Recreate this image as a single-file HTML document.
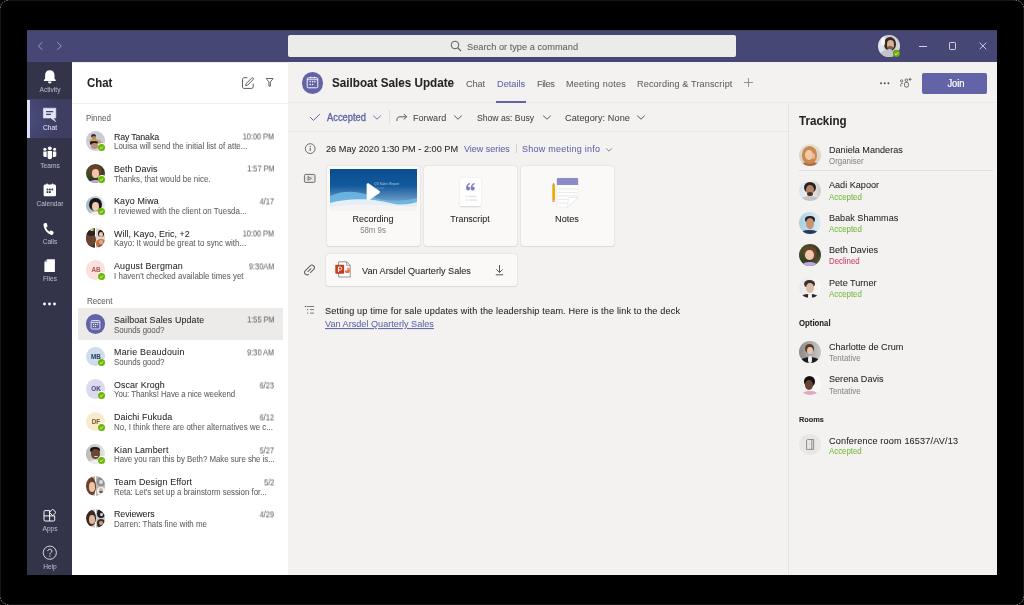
<!DOCTYPE html>
<html><head><meta charset="utf-8">
<style>
*{margin:0;padding:0;box-sizing:border-box}
html,body{width:1024px;height:605px;overflow:hidden;background:#000;font-family:"Liberation Sans",sans-serif}
.r{position:absolute;display:block}
.t{position:absolute;white-space:nowrap;line-height:1;will-change:transform;transform:scaleY(1.07);transform-origin:0 80%;-webkit-text-stroke:0.05px currentColor}
</style></head><body>

<div class="r" style="left:0px;top:0px;width:1024px;height:605px;background:#000;"></div>
<div class="r" style="left:8px;top:0px;width:1008px;height:1px;background:#161616;"></div>
<div class="r" style="left:0px;top:8px;width:1px;height:589px;background:#161616;"></div>
<div class="r" style="left:1023px;top:8px;width:1px;height:589px;background:#161616;"></div>
<div class="r" style="left:8px;top:604px;width:1008px;height:1px;background:#161616;"></div>
<svg class="r" style="left:0px;top:0px;" width="1024" height="605" viewBox="0 0 1024 605"><g stroke="#bdbdbd" stroke-width="0.8" fill="none" stroke-dasharray="1.3 1.2"><path d="M0.4 7.8 A7.8 7.8 0 0 1 8.2 0.4"/><path d="M1015.8 0.4 A7.8 7.8 0 0 1 1023.6 8.2"/><path d="M1023.6 596.8 A7.8 7.8 0 0 1 1015.8 604.6"/><path d="M8.2 604.6 A7.8 7.8 0 0 1 0.4 596.8"/></g></svg>
<div class="r" style="left:27px;top:30px;width:970px;height:545px;background:#f3f2f1;"></div>
<div class="r" style="left:27px;top:30px;width:970px;height:32px;background:#464775;"></div>
<div class="r" style="left:27px;top:30px;width:970px;height:1px;background:#3d3e66;"></div>
<svg class="r" style="left:36px;top:41px;" width="30" height="10" viewBox="0 0 30 10"><path d="M6.3 1.3 L2.3 5 L6.3 8.7" stroke="#9a9bc6" stroke-width="1" fill="none"/><path d="M21.3 1.3 L25.3 5 L21.3 8.7" stroke="#9a9bc6" stroke-width="1" fill="none"/></svg>
<div class="r" style="left:288px;top:35px;width:448px;height:22px;background:#ebebe9;border-radius:2px"></div>
<svg class="r" style="left:450px;top:40px;" width="12" height="12" viewBox="0 0 12 12"><circle cx="5" cy="5" r="3.8" stroke="#605e5c" stroke-width="1" fill="none"/><path d="M7.8 7.8 L11 11" stroke="#605e5c" stroke-width="1.1"/></svg>
<div class="t" style="top:42.73px;font-size:9.25px;color:#605e5c;left:467.30px;">Search or type a command</div>
<div class="r" style="left:878.35px;top:35.25px;width:21.7px;height:21.7px;border-radius:50%;background:linear-gradient(90deg,#e0e4ea 0 20%,#c8ccd0 40%,#d8d6d4);overflow:hidden;"><div style="position:absolute;left:0;top:0;width:100%;height:100%;filter:blur(0.5px)"><div style="position:absolute;left:-0.43px;top:14.76px;width:22.57px;height:12.15px;border-radius:50%;background:#c4c4c8;"></div><div style="position:absolute;left:5.64px;top:1.95px;width:12.15px;height:13.45px;border-radius:50%;background:#3a2a22;"></div><div style="position:absolute;left:8.25px;top:4.77px;width:6.94px;height:8.68px;border-radius:50%;background:#d8b098;"></div><div style="position:absolute;left:2.60px;top:2.17px;width:4.34px;height:8.68px;border-radius:50%;background:#f4f6f8;"></div><div style="position:absolute;left:8.90px;top:11.07px;width:5.64px;height:3.04px;border-radius:50%;background:#7a5e4c;"></div><div style="position:absolute;left:9.11px;top:14.11px;width:4.34px;height:2.17px;border-radius:50%;background:#b8c4d8;"></div></div></div>
<svg class="r" style="left:893.2px;top:49.9px;" width="7.2" height="7.2" viewBox="0 0 7.2 7.2"><circle cx="3.6" cy="3.6" r="3.5" fill="#6bb700" stroke="#464775" stroke-width="0.4"/><path d="M2 3.7 L3.1 4.7 L5.2 2.6" stroke="#fff" stroke-width="0.8" fill="none"/></svg>
<div class="r" style="left:919.4px;top:46px;width:7.4px;height:1px;background:#cfd0e6;"></div>
<div class="r" style="left:949px;top:42.3px;width:7.4px;height:7.4px;background:transparent;border:1px solid #cfd0e6;border-radius:1.2px"></div>
<svg class="r" style="left:978.8px;top:42px;" width="8" height="8" viewBox="0 0 8 8"><path d="M0.6 0.6 L7.3 7.3 M7.3 0.6 L0.6 7.3" stroke="#cfd0e6" stroke-width="0.95"/></svg>
<div class="r" style="left:27px;top:62px;width:45px;height:513px;background:#33344a;"></div>
<div class="r" style="left:27px;top:99px;width:45px;height:39px;background:radial-gradient(ellipse 30px 40px at 0% 50%, #4a4c7e, #3d3e62);"></div>
<div class="r" style="left:27px;top:100px;width:3px;height:37.5px;background:#dedff6;"></div>
<svg class="r" style="left:42px;top:69.5px;" width="16" height="16" viewBox="0 0 16 16"><path d="M7.8 0.3 C5 0.3 3.1 2.3 3.1 5.2 L3.1 8.6 C3.1 9.2 2.6 9.5 2.1 9.6 C1.7 9.7 1.7 11 2.1 11 L13.5 11 C13.9 11 13.9 9.7 13.5 9.6 C13 9.5 12.5 9.2 12.5 8.6 L12.5 5.2 C12.5 2.3 10.6 0.3 7.8 0.3 Z" fill="#fff"/><path d="M5.9 11.6 C6 14.2 9.6 14.2 9.7 11.6 Z" fill="#fff"/></svg>
<div class="t" style="top:86.55px;font-size:6.6px;color:#b8b8ca;left:-150.50px;width:400px;text-align:center;">Activity</div>
<svg class="r" style="left:42px;top:107px;" width="15" height="16" viewBox="0 0 15 16"><path d="M1.4 1.2 L13.8 1.2 L13.8 11 L11.4 11 L13.6 14.6 L8.6 11 L1.4 11 Z" fill="#e4e4f6" stroke="#e4e4f6" stroke-width="0.6" stroke-linejoin="round"/><path d="M4 4.6 L11.2 4.6 M4 7.4 L9 7.4" stroke="#45466e" stroke-width="1.1"/></svg>
<div class="t" style="top:124.55px;font-size:6.6px;color:#e4e4f6;left:-150.50px;width:400px;text-align:center;">Chat</div>
<svg class="r" style="left:42px;top:145.5px;" width="15" height="15" viewBox="0 0 15 15"><g fill="#fff"><circle cx="7.8" cy="2.3" r="1.9"/><circle cx="2.9" cy="3.3" r="1.5"/><circle cx="12.6" cy="3.3" r="1.5"/><path d="M5.6 5 L10 5 L10 11.3 C10 12.6 9 13.3 7.8 13.3 C6.6 13.3 5.6 12.6 5.6 11.3 Z"/><path d="M1.3 5.6 L4.7 5.6 L4.7 10.9 C3.4 11.3 1.3 10.6 1.3 9.4 Z"/><path d="M10.9 5.6 L14.3 5.6 L14.3 9.4 C14.3 10.6 12.2 11.3 10.9 10.9 Z"/></g></svg>
<div class="t" style="top:162.55px;font-size:6.6px;color:#b8b8ca;left:-150.50px;width:400px;text-align:center;">Teams</div>
<svg class="r" style="left:42px;top:183.2px;" width="15" height="15" viewBox="0 0 15 15"><path d="M3.2 1.6 L12.4 1.6 C13.3 1.6 14 2.3 14 3.2 L14 11.7 C14 12.6 13.3 13.3 12.4 13.3 L3.2 13.3 C2.3 13.3 1.6 12.6 1.6 11.7 L1.6 3.2 C1.6 2.3 2.3 1.6 3.2 1.6 Z" fill="#fff"/><circle cx="5" cy="1.3" r="0.9" fill="#fff"/><circle cx="10.6" cy="1.3" r="0.9" fill="#fff"/><g fill="#33344a"><rect x="4.6" y="5.6" width="1.8" height="1.8"/><rect x="7" y="5.6" width="1.8" height="1.8"/><rect x="9.4" y="5.6" width="1.8" height="1.8"/><rect x="4.6" y="8.2" width="1.8" height="1.8"/><rect x="7" y="8.2" width="1.8" height="1.8"/></g></svg>
<div class="t" style="top:200.55px;font-size:6.6px;color:#b8b8ca;left:-150.50px;width:400px;text-align:center;">Calendar</div>
<svg class="r" style="left:41px;top:221.5px;" width="15" height="15" viewBox="0 0 15 15"><path d="M3.4 1.2 L4.9 0.9 C5.4 0.8 5.8 1.1 5.9 1.5 L6.5 4.1 C6.6 4.5 6.4 4.9 6 5.1 L5.1 5.6 C5.7 7.4 6.9 8.8 8.5 9.8 L9.1 9 C9.4 8.6 9.8 8.5 10.2 8.6 L12.1 9.6 C12.5 9.8 12.7 10.2 12.6 10.6 L12.2 12.1 C12 12.7 11.4 13 10.8 12.9 C6.8 12.2 3.3 8.2 2.5 3 C2.4 2.2 2.7 1.4 3.4 1.2 Z" fill="#fff"/></svg>
<div class="t" style="top:238.55px;font-size:6.6px;color:#b8b8ca;left:-150.50px;width:400px;text-align:center;">Calls</div>
<svg class="r" style="left:42px;top:258px;" width="15" height="15" viewBox="0 0 15 15"><path d="M5.2 1.2 L12.9 1.2 L12.9 14 L2.4 14 L2.4 4 Z" fill="#fff"/><path d="M2.4 4 L5.2 4 L5.2 1.2 Z" fill="#a8a8ba"/></svg>
<div class="t" style="top:275.55px;font-size:6.6px;color:#b8b8ca;left:-150.50px;width:400px;text-align:center;">Files</div>
<svg class="r" style="left:42px;top:299.5px;" width="15" height="8" viewBox="0 0 15 8"><circle cx="2.5" cy="4" r="1.4" fill="#fff"/><circle cx="7.5" cy="4" r="1.4" fill="#fff"/><circle cx="12.5" cy="4" r="1.4" fill="#fff"/></svg>
<svg class="r" style="left:42px;top:507.5px;" width="15" height="15" viewBox="0 0 15 15"><g stroke="#fff" stroke-width="0.95" fill="none" stroke-linejoin="round"><path d="M7.6 2.6 L3.1 2.6 Q2 2.6 2 3.7 L2 11.9 Q2 13 3.1 13 L11.6 13 Q12.7 13 12.7 11.9 L12.7 7.9 L2 7.9 M7.6 2.6 L7.6 13"/><path d="M10.7 1.1 L14 4.4 L10.7 7.7 L7.4 4.4 Z"/></g></svg>
<div class="t" style="top:525.55px;font-size:6.6px;color:#b8b8ca;left:-150.50px;width:400px;text-align:center;">Apps</div>
<svg class="r" style="left:42px;top:545px;" width="16" height="16" viewBox="0 0 16 16"><circle cx="7.8" cy="7.7" r="6.6" stroke="#e0e0ea" stroke-width="0.95" fill="none"/><path d="M5.7 6 C5.7 3.7 10 3.6 10 5.9 C10 7.4 7.9 7.6 7.9 9.5" stroke="#e0e0ea" stroke-width="1" fill="none"/><circle cx="7.9" cy="11.2" r="0.65" fill="#e0e0ea"/></svg>
<div class="t" style="top:563.55px;font-size:6.6px;color:#b8b8ca;left:-150.50px;width:400px;text-align:center;">Help</div>
<div class="r" style="left:72px;top:62px;width:216px;height:513px;background:#fff;"></div>
<div class="r" style="left:72px;top:62px;width:216px;height:1px;background:#e8e8ee;"></div>
<div class="t" style="top:77.65px;font-size:11.4px;color:#252423;font-weight:700;left:86.70px;">Chat</div>
<div class="r" style="left:72px;top:103px;width:216px;height:1px;background:#f0f0f0;"></div>
<svg class="r" style="left:241px;top:75.5px;" width="14" height="14" viewBox="0 0 14 14"><path d="M6.4 1.7 L3 1.7 C2.1 1.7 1.5 2.3 1.5 3.2 L1.5 10.9 C1.5 11.8 2.1 12.4 3 12.4 L10.7 12.4 C11.6 12.4 12.2 11.8 12.2 10.9 L12.2 7.6" stroke="#605e5c" stroke-width="1" fill="none"/><path d="M10.6 2.2 C11.1 1.7 11.8 1.7 12.2 2.1 C12.6 2.5 12.6 3.2 12.1 3.7 L6.6 9.1 L4.6 9.6 L5.1 7.6 Z" stroke="#605e5c" stroke-width="1" fill="none" stroke-linejoin="round"/></svg>
<svg class="r" style="left:264px;top:76px;" width="12" height="12" viewBox="0 0 12 12"><path d="M2.2 2.5 L9.1 2.5 L6.4 5.9 L6.4 10.1 L4.9 10.1 L4.9 5.9 Z" stroke="#605e5c" stroke-width="0.95" fill="none" stroke-linejoin="round"/></svg>
<div class="t" style="top:114.85px;font-size:8.0px;color:#616161;left:86.20px;">Pinned</div>
<div class="t" style="top:297.85px;font-size:8.0px;color:#616161;left:86.60px;">Recent</div>
<div class="r" style="left:78px;top:308px;width:205px;height:32px;background:#edebe9;"></div>
<div class="r" style="left:85.75px;top:131.25px;width:19.5px;height:19.5px;border-radius:50%;background:linear-gradient(180deg,#c6c8da,#d8d2d4);overflow:hidden;"><div style="position:absolute;left:0;top:0;width:100%;height:100%;filter:blur(0.5px)"><div style="position:absolute;left:0.97px;top:16.18px;width:15.60px;height:6.63px;border-radius:50%;background:#d8d0d0;"></div><div style="position:absolute;left:3.31px;top:7.80px;width:12.09px;height:3.90px;border-radius:50%;background:#c8a850;"></div><div style="position:absolute;left:4.49px;top:9.95px;width:8.19px;height:2.34px;border-radius:50%;background:#2a2424;"></div><div style="position:absolute;left:5.07px;top:2.54px;width:5.46px;height:4.29px;border-radius:50%;background:#3a2c24;"></div><div style="position:absolute;left:6.04px;top:4.68px;width:4.29px;height:3.90px;border-radius:50%;background:#b88a6c;"></div><div style="position:absolute;left:4.29px;top:10.34px;width:7.02px;height:3.51px;border-radius:50%;background:#241c1c;"></div><div style="position:absolute;left:4.88px;top:11.89px;width:7.41px;height:5.85px;border-radius:50%;background:#b89080;"></div><div style="position:absolute;left:11.89px;top:10.92px;width:5.85px;height:2.34px;border-radius:50%;background:#b89890;"></div></div></div>
<div class="r" style="left:97.50px;top:143.00px;width:8.60px;height:8.60px;border-radius:50%;background:#fff"></div>
<svg class="r" style="left:98.3px;top:143.8px;" width="7" height="7" viewBox="0 0 7 7"><circle cx="3.5" cy="3.5" r="3.5" fill="#6bb700"/><path d="M1.9600000000000002 3.64 L3.08 4.69 L5.04 2.52" stroke="#fff" stroke-width="0.84" fill="none"/></svg>
<div class="t" style="top:132.90px;font-size:8.9px;color:#252423;left:113.50px;letter-spacing:-0.182px">Ray Tanaka</div>
<div class="t" style="top:142.90px;font-size:7.9px;color:#616161;left:113.50px;letter-spacing:0.044px">Louisa will send the initial list of atte...</div>
<div class="t" style="top:133.75px;font-size:8.2px;color:#616161;right:749.60px;text-align:right;transform:scale(0.895,1.07);transform-origin:100% 80%">10:00 PM</div>
<div class="r" style="left:85.75px;top:163.55px;width:19.5px;height:19.5px;border-radius:50%;background:linear-gradient(135deg,#4a5a30,#2e3a20 60%,#6a6a3a);overflow:hidden;"><div style="position:absolute;left:0;top:0;width:100%;height:100%;filter:blur(0.5px)"><div style="position:absolute;left:2.92px;top:16.18px;width:13.65px;height:6.63px;border-radius:50%;background:#c0a8e0;"></div><div style="position:absolute;left:3.31px;top:1.75px;width:12.87px;height:12.87px;border-radius:50%;background:#6a4028;"></div><div style="position:absolute;left:5.85px;top:5.46px;width:7.80px;height:9.36px;border-radius:50%;background:#f0c8b0;"></div></div></div>
<div class="r" style="left:97.50px;top:175.30px;width:8.60px;height:8.60px;border-radius:50%;background:#fff"></div>
<svg class="r" style="left:98.3px;top:176.1px;" width="7" height="7" viewBox="0 0 7 7"><circle cx="3.5" cy="3.5" r="3.5" fill="#6bb700"/><path d="M1.9600000000000002 3.64 L3.08 4.69 L5.04 2.52" stroke="#fff" stroke-width="0.84" fill="none"/></svg>
<div class="t" style="top:164.90px;font-size:8.9px;color:#252423;left:113.50px;letter-spacing:0.052px">Beth Davis</div>
<div class="t" style="top:175.90px;font-size:7.9px;color:#616161;left:113.50px;letter-spacing:0.021px">Thanks, that would be nice.</div>
<div class="t" style="top:165.75px;font-size:8.2px;color:#616161;right:749.60px;text-align:right;transform:scale(0.895,1.07);transform-origin:100% 80%">1:57 PM</div>
<div class="r" style="left:85.75px;top:195.85px;width:19.5px;height:19.5px;border-radius:50%;background:linear-gradient(90deg,#98b8c8,#e8eeee);overflow:hidden;"><div style="position:absolute;left:0;top:0;width:100%;height:100%;filter:blur(0.5px)"><div style="position:absolute;left:1.95px;top:15.99px;width:15.60px;height:7.02px;border-radius:50%;background:#f4f0ee;"></div><div style="position:absolute;left:3.71px;top:1.75px;width:12.09px;height:13.65px;border-radius:50%;background:#1c1818;"></div><div style="position:absolute;left:6.04px;top:6.04px;width:7.41px;height:8.97px;border-radius:50%;background:#f0cab0;"></div></div></div>
<div class="r" style="left:97.50px;top:207.60px;width:8.60px;height:8.60px;border-radius:50%;background:#fff"></div>
<svg class="r" style="left:98.3px;top:208.4px;" width="7" height="7" viewBox="0 0 7 7"><circle cx="3.5" cy="3.5" r="3.5" fill="#6bb700"/><path d="M1.9600000000000002 3.64 L3.08 4.69 L5.04 2.52" stroke="#fff" stroke-width="0.84" fill="none"/></svg>
<div class="t" style="top:196.90px;font-size:8.9px;color:#252423;left:113.50px;letter-spacing:0.159px">Kayo Miwa</div>
<div class="t" style="top:207.90px;font-size:7.9px;color:#616161;left:113.50px;letter-spacing:0.026px">I reviewed with the client on Tuesda...</div>
<div class="t" style="top:197.75px;font-size:8.2px;color:#616161;right:749.60px;text-align:right;transform:scale(0.895,1.07);transform-origin:100% 80%">4/17</div>
<div class="r" style="left:85.75px;top:228.15px;width:19.5px;height:19.5px;border-radius:50%;background:linear-gradient(90deg,#3a3030 0 50%,#fff 50% 55%,#dcd4d0 55%);overflow:hidden;"><div style="position:absolute;left:0;top:0;width:100%;height:100%;filter:blur(0.5px)"><div style="position:absolute;left:0.58px;top:4.49px;width:9.75px;height:13.65px;border-radius:50%;background:#6a4430;"></div><div style="position:absolute;left:1.17px;top:1.75px;width:8.58px;height:5.85px;border-radius:50%;background:#2a2222;"></div><div style="position:absolute;left:3.90px;top:0.58px;width:3.90px;height:1.95px;border-radius:50%;background:#e8c060;"></div><div style="position:absolute;left:11.89px;top:1.75px;width:6.63px;height:6.63px;border-radius:50%;background:#1e1a1a;"></div><div style="position:absolute;left:13.06px;top:3.71px;width:4.29px;height:5.07px;border-radius:50%;background:#f0c8b0;"></div><div style="position:absolute;left:10.34px;top:10.92px;width:9.75px;height:8.58px;border-radius:50%;background:#d07030;"></div><div style="position:absolute;left:13.65px;top:12.29px;width:3.12px;height:3.51px;border-radius:50%;background:#d8a890;"></div><div style="position:absolute;left:12.29px;top:16.77px;width:5.85px;height:3.12px;border-radius:50%;background:#4a5a9a;"></div></div></div>
<div class="t" style="top:229.90px;font-size:8.9px;color:#252423;left:113.50px;letter-spacing:0.051px">Will, Kayo, Eric, +2</div>
<div class="t" style="top:239.90px;font-size:7.9px;color:#616161;left:113.50px;letter-spacing:0.036px">Kayo: It would be great to sync with...</div>
<div class="t" style="top:230.75px;font-size:8.2px;color:#616161;right:749.60px;text-align:right;transform:scale(0.895,1.07);transform-origin:100% 80%">10:00 PM</div>
<div class="r" style="left:85.75px;top:260.45px;width:19.5px;height:19.5px;border-radius:50%;background:#fbe0dc;overflow:hidden;"></div>
<div class="t" style="top:266.70px;font-size:6.3px;color:#a8605a;font-weight:700;left:-104.50px;width:400px;text-align:center;">AB</div>
<div class="r" style="left:97.50px;top:272.20px;width:8.60px;height:8.60px;border-radius:50%;background:#fff"></div>
<svg class="r" style="left:98.3px;top:273.0px;" width="7" height="7" viewBox="0 0 7 7"><circle cx="3.5" cy="3.5" r="3.5" fill="#6bb700"/><path d="M1.9600000000000002 3.64 L3.08 4.69 L5.04 2.52" stroke="#fff" stroke-width="0.84" fill="none"/></svg>
<div class="t" style="top:261.90px;font-size:8.9px;color:#252423;left:113.50px;letter-spacing:0.201px">August Bergman</div>
<div class="t" style="top:272.90px;font-size:7.9px;color:#616161;left:113.50px;letter-spacing:0.036px">I haven't checked available times yet</div>
<div class="t" style="top:262.75px;font-size:8.2px;color:#616161;right:749.60px;text-align:right;transform:scale(0.895,1.07);transform-origin:100% 80%">9:30AM</div>
<div class="r" style="left:85.75px;top:314.45px;width:19.5px;height:19.5px;border-radius:50%;background:#6264a7;overflow:hidden;"></div>
<svg class="r" style="left:90px;top:318.7px;" width="11" height="11" viewBox="0 0 11 11"><rect x="1.1" y="1.6" width="8.8" height="8.4" rx="1" stroke="#e8e8f6" stroke-width="0.9" fill="none"/><path d="M1.1 3.4 L9.9 3.4" stroke="#e8e8f6" stroke-width="0.9"/><circle cx="4" cy="1.6" r="0.7" fill="#e8e8f6"/><circle cx="7" cy="1.6" r="0.7" fill="#e8e8f6"/><g fill="#e8e8f6"><circle cx="3.6" cy="5.4" r="0.65"/><circle cx="5.5" cy="5.4" r="0.65"/><circle cx="7.4" cy="5.4" r="0.65"/><circle cx="3.6" cy="7.4" r="0.65"/><circle cx="5.5" cy="7.4" r="0.65"/></g></svg>
<div class="t" style="top:315.90px;font-size:8.9px;color:#252423;left:113.50px;letter-spacing:0.117px">Sailboat Sales Update</div>
<div class="t" style="top:326.90px;font-size:7.9px;color:#616161;left:113.50px;letter-spacing:-0.041px">Sounds good?</div>
<div class="t" style="top:316.75px;font-size:8.2px;color:#616161;right:749.60px;text-align:right;transform:scale(0.895,1.07);transform-origin:100% 80%">1:55 PM</div>
<div class="r" style="left:85.75px;top:346.85px;width:19.5px;height:19.5px;border-radius:50%;background:#cfdcec;overflow:hidden;"></div>
<div class="t" style="top:353.70px;font-size:6.3px;color:#2a4070;font-weight:700;left:-104.50px;width:400px;text-align:center;">MB</div>
<div class="r" style="left:97.50px;top:358.60px;width:8.60px;height:8.60px;border-radius:50%;background:#fff"></div>
<svg class="r" style="left:98.3px;top:359.4px;" width="7" height="7" viewBox="0 0 7 7"><circle cx="3.5" cy="3.5" r="3.5" fill="#6bb700"/><path d="M1.9600000000000002 3.64 L3.08 4.69 L5.04 2.52" stroke="#fff" stroke-width="0.84" fill="none"/></svg>
<div class="t" style="top:347.90px;font-size:8.9px;color:#252423;left:113.50px;letter-spacing:0.237px">Marie Beaudouin</div>
<div class="t" style="top:358.90px;font-size:7.9px;color:#616161;left:113.50px;letter-spacing:-0.041px">Sounds good?</div>
<div class="t" style="top:348.75px;font-size:8.2px;color:#616161;right:749.60px;text-align:right;transform:scale(0.895,1.07);transform-origin:100% 80%">9:30 AM</div>
<div class="r" style="left:85.75px;top:379.25px;width:19.5px;height:19.5px;border-radius:50%;background:#dcdaf0;overflow:hidden;"></div>
<div class="t" style="top:385.70px;font-size:6.3px;color:#464775;font-weight:700;left:-104.50px;width:400px;text-align:center;">OK</div>
<div class="r" style="left:97.50px;top:391.00px;width:8.60px;height:8.60px;border-radius:50%;background:#fff"></div>
<svg class="r" style="left:98.3px;top:391.8px;" width="7" height="7" viewBox="0 0 7 7"><circle cx="3.5" cy="3.5" r="3.5" fill="#6bb700"/><path d="M1.9600000000000002 3.64 L3.08 4.69 L5.04 2.52" stroke="#fff" stroke-width="0.84" fill="none"/></svg>
<div class="t" style="top:380.90px;font-size:8.9px;color:#252423;left:113.50px;letter-spacing:0.094px">Oscar Krogh</div>
<div class="t" style="top:390.90px;font-size:7.9px;color:#616161;left:113.50px;letter-spacing:-0.068px">You: Thanks! Have a nice weekend</div>
<div class="t" style="top:381.75px;font-size:8.2px;color:#616161;right:749.60px;text-align:right;transform:scale(0.895,1.07);transform-origin:100% 80%">6/23</div>
<div class="r" style="left:85.75px;top:411.65px;width:19.5px;height:19.5px;border-radius:50%;background:#f6ebcd;overflow:hidden;"></div>
<div class="t" style="top:418.70px;font-size:6.3px;color:#7a5a30;font-weight:700;left:-104.50px;width:400px;text-align:center;">DF</div>
<div class="r" style="left:97.50px;top:423.40px;width:8.60px;height:8.60px;border-radius:50%;background:#fff"></div>
<svg class="r" style="left:98.3px;top:424.2px;" width="7" height="7" viewBox="0 0 7 7"><circle cx="3.5" cy="3.5" r="3.5" fill="#6bb700"/><path d="M1.9600000000000002 3.64 L3.08 4.69 L5.04 2.52" stroke="#fff" stroke-width="0.84" fill="none"/></svg>
<div class="t" style="top:412.90px;font-size:8.9px;color:#252423;left:113.50px;letter-spacing:0.118px">Daichi Fukuda</div>
<div class="t" style="top:423.90px;font-size:7.9px;color:#616161;left:113.50px;letter-spacing:0.041px">No, I think there are other alternatives we c...</div>
<div class="t" style="top:413.75px;font-size:8.2px;color:#616161;right:749.60px;text-align:right;transform:scale(0.895,1.07);transform-origin:100% 80%">6/12</div>
<div class="r" style="left:85.75px;top:444.05px;width:19.5px;height:19.5px;border-radius:50%;background:linear-gradient(90deg,#b8b8b8,#e4e4e4);overflow:hidden;"><div style="position:absolute;left:0;top:0;width:100%;height:100%;filter:blur(0.5px)"><div style="position:absolute;left:1.95px;top:16.38px;width:15.60px;height:7.02px;border-radius:50%;background:#eeeeee;"></div><div style="position:absolute;left:4.29px;top:2.54px;width:10.14px;height:6.63px;border-radius:50%;background:#181414;"></div><div style="position:absolute;left:5.66px;top:5.07px;width:8.19px;height:10.14px;border-radius:50%;background:#6a4634;"></div><div style="position:absolute;left:8.58px;top:12.29px;width:3.90px;height:1.17px;border-radius:50%;background:#e8e0dc;"></div></div></div>
<div class="r" style="left:97.50px;top:455.80px;width:8.60px;height:8.60px;border-radius:50%;background:#fff"></div>
<svg class="r" style="left:98.3px;top:456.6px;" width="7" height="7" viewBox="0 0 7 7"><circle cx="3.5" cy="3.5" r="3.5" fill="#6bb700"/><path d="M1.9600000000000002 3.64 L3.08 4.69 L5.04 2.52" stroke="#fff" stroke-width="0.84" fill="none"/></svg>
<div class="t" style="top:445.90px;font-size:8.9px;color:#252423;left:113.50px;letter-spacing:0.143px">Kian Lambert</div>
<div class="t" style="top:455.90px;font-size:7.9px;color:#616161;left:113.50px;letter-spacing:-0.056px">Have you ran this by Beth? Make sure she is...</div>
<div class="t" style="top:446.75px;font-size:8.2px;color:#616161;right:749.60px;text-align:right;transform:scale(0.895,1.07);transform-origin:100% 80%">5/27</div>
<div class="r" style="left:85.75px;top:476.45px;width:19.5px;height:19.5px;border-radius:50%;background:linear-gradient(90deg,#c8b0a0 0 50%,#fff 50% 55%,#b8b8b8 55%);overflow:hidden;"><div style="position:absolute;left:0;top:0;width:100%;height:100%;filter:blur(0.5px)"><div style="position:absolute;left:0.39px;top:0.39px;width:10.14px;height:18.72px;border-radius:50%;background:#6a4030;"></div><div style="position:absolute;left:2.92px;top:5.66px;width:6.63px;height:9.75px;border-radius:50%;background:#ecc4a8;"></div><div style="position:absolute;left:11.31px;top:0.78px;width:7.80px;height:8.58px;border-radius:50%;background:#909090;"></div><div style="position:absolute;left:13.65px;top:3.51px;width:3.12px;height:3.90px;border-radius:50%;background:#d8d8d8;"></div><div style="position:absolute;left:11.31px;top:10.14px;width:7.80px;height:8.58px;border-radius:50%;background:#f0f0f0;"></div><div style="position:absolute;left:13.26px;top:11.89px;width:3.90px;height:4.29px;border-radius:50%;background:#d8b098;"></div><div style="position:absolute;left:13.26px;top:15.02px;width:3.90px;height:1.95px;border-radius:50%;background:#6a5040;"></div></div></div>
<div class="t" style="top:477.90px;font-size:8.9px;color:#252423;left:113.50px;letter-spacing:0.158px">Team Design Effort</div>
<div class="t" style="top:488.90px;font-size:7.9px;color:#616161;left:113.50px;letter-spacing:-0.021px">Reta: Let's set up a brainstorm session for...</div>
<div class="t" style="top:478.75px;font-size:8.2px;color:#616161;right:749.60px;text-align:right;transform:scale(0.895,1.07);transform-origin:100% 80%">5/2</div>
<div class="r" style="left:85.75px;top:508.85px;width:19.5px;height:19.5px;border-radius:50%;background:linear-gradient(90deg,#d8c8c0 0 50%,#fff 50% 55%,#c8c8c8 55%);overflow:hidden;"><div style="position:absolute;left:0;top:0;width:100%;height:100%;filter:blur(0.5px)"><div style="position:absolute;left:0.39px;top:1.17px;width:10.14px;height:15.60px;border-radius:50%;background:#3a2820;"></div><div style="position:absolute;left:3.31px;top:6.24px;width:5.85px;height:8.58px;border-radius:50%;background:#e0b8a0;"></div><div style="position:absolute;left:10.92px;top:0.58px;width:8.58px;height:8.97px;border-radius:50%;background:#202020;"></div><div style="position:absolute;left:14.43px;top:4.29px;width:2.34px;height:3.12px;border-radius:50%;background:#d0d0d0;"></div><div style="position:absolute;left:10.92px;top:10.53px;width:8.58px;height:8.58px;border-radius:50%;background:#3a3028;"></div><div style="position:absolute;left:13.46px;top:12.09px;width:3.51px;height:3.90px;border-radius:50%;background:#c89878;"></div></div></div>
<div class="t" style="top:509.90px;font-size:8.9px;color:#252423;left:113.50px;letter-spacing:-0.093px">Reviewers</div>
<div class="t" style="top:520.90px;font-size:7.9px;color:#616161;left:113.50px;letter-spacing:0.024px">Darren: Thats fine with me</div>
<div class="t" style="top:510.75px;font-size:8.2px;color:#616161;right:749.60px;text-align:right;transform:scale(0.895,1.07);transform-origin:100% 80%">4/29</div>
<div class="r" style="left:288px;top:62px;width:709px;height:41px;background:#f3f2f1;"></div>
<div class="r" style="left:288px;top:102px;width:709px;height:1px;background:#ebe9e7;"></div>
<div class="r" style="left:301.85px;top:72.15px;width:21.5px;height:21.5px;border-radius:50%;background:#6264a7;overflow:hidden;"></div>
<svg class="r" style="left:306px;top:76px;" width="13" height="13" viewBox="0 0 13 13"><rect x="1.2" y="1.8" width="10.6" height="10" rx="1.1" stroke="#fff" stroke-width="0.95" fill="none"/><path d="M1.2 3.7 L11.8 3.7" stroke="#fff" stroke-width="0.8"/><circle cx="4.6" cy="1.6" r="0.8" fill="#fff"/><circle cx="8.4" cy="1.6" r="0.8" fill="#fff"/><g fill="#fff"><circle cx="4.2" cy="5.8" r="0.75"/><circle cx="6.6" cy="5.8" r="0.75"/><circle cx="8.9" cy="5.8" r="0.75"/><circle cx="4.2" cy="8.4" r="0.75"/><circle cx="6.6" cy="8.4" r="0.75"/></g></svg>
<div class="t" style="top:77.00px;font-size:11.7px;color:#252423;font-weight:700;left:331.80px;">Sailboat Sales Update</div>
<div class="t" style="top:79.70px;font-size:9.3px;color:#616161;left:465.90px;letter-spacing:-0.2px">Chat</div>
<div class="t" style="top:79.73px;font-size:9.23px;color:#6264a7;left:496.60px;">Details</div>
<div class="r" style="left:496px;top:100.5px;width:29.5px;height:2px;background:#6264a7;"></div>
<div class="t" style="top:79.70px;font-size:9.3px;color:#616161;left:536.60px;letter-spacing:-0.45px">Files</div>
<div class="t" style="top:79.80px;font-size:9.1px;color:#616161;left:565.60px;letter-spacing:0.220px">Meeting notes</div>
<div class="t" style="top:79.80px;font-size:9.1px;color:#616161;left:636.80px;letter-spacing:0.136px">Recording &amp; Transcript</div>
<svg class="r" style="left:743px;top:77px;" width="11" height="11" viewBox="0 0 11 11"><path d="M5.5 1 L5.5 10 M1 5.5 L10 5.5" stroke="#8a8886" stroke-width="0.9"/></svg>
<svg class="r" style="left:872px;top:72px;" width="46" height="22" viewBox="0 0 46 22"><circle cx="9" cy="11.2" r="0.95" fill="#484644"/><circle cx="12.7" cy="11.2" r="0.95" fill="#484644"/><circle cx="16.4" cy="11.2" r="0.95" fill="#484644"/><g stroke="#605e5c" stroke-width="0.9" fill="none"><circle cx="29.6" cy="8.9" r="1.1"/><circle cx="34.4" cy="8.2" r="1.3"/><path d="M30.8 11.4 L30 11.4 C29 11.4 28.8 12.2 28.8 13 L28.8 14.6"/><rect x="32.6" y="10.4" width="3.8" height="4.6" rx="1.2"/><path d="M38 5.8 L38 8.8 M36.5 7.3 L39.5 7.3"/></g></svg>
<div class="r" style="left:922.3px;top:72.5px;width:64.6px;height:21.1px;background:#6264a7;border-radius:2px"></div>
<div class="t" style="top:79.15px;font-size:9.4px;color:#fff;left:755.60px;width:400px;text-align:center;-webkit-text-stroke:0.2px #fff">Join</div>
<div class="r" style="left:288px;top:103px;width:500px;height:28px;background:#f3f2f1;"></div>
<div class="r" style="left:288px;top:130.5px;width:500px;height:1px;background:#e9e7e5;"></div>
<svg class="r" style="left:309px;top:113px;" width="12" height="9" viewBox="0 0 12 9"><path d="M1.2 4.2 L4.4 7.4 L10.8 1.2" stroke="#6264a7" stroke-width="1" fill="none"/></svg>
<div class="t" style="top:113.67px;font-size:9.35px;color:#6264a7;left:326.50px;-webkit-text-stroke:0.3px #6264a7">Accepted</div>
<svg class="r" style="left:372px;top:114px;" width="10" height="7" viewBox="0 0 10 7"><path d="M1.2 1.6 L5 5.2 L8.8 1.6" stroke="#6264a7" stroke-width="0.9" fill="none"/></svg>
<div class="r" style="left:389px;top:110px;width:1px;height:14px;background:#e1dfdd;"></div>
<svg class="r" style="left:395.5px;top:112.6px;" width="12" height="9" viewBox="0 0 12 9"><path d="M1 8 L1 6.5 C1 4.8 2.2 3.8 4 3.8 L10.5 3.8 M7.8 1 L10.6 3.8 L7.8 6.6" stroke="#484644" stroke-width="0.9" fill="none"/></svg>
<div class="t" style="top:113.82px;font-size:9.05px;color:#484644;left:412.80px;">Forward</div>
<svg class="r" style="left:453px;top:114px;" width="10" height="7" viewBox="0 0 10 7"><path d="M1.2 1.6 L5 5.2 L8.8 1.6" stroke="#484644" stroke-width="0.9" fill="none"/></svg>
<div class="t" style="top:114.03px;font-size:8.63px;color:#484644;left:476.60px;">Show as: Busy</div>
<svg class="r" style="left:541.5px;top:114px;" width="10" height="7" viewBox="0 0 10 7"><path d="M1.2 1.6 L5 5.2 L8.8 1.6" stroke="#484644" stroke-width="0.9" fill="none"/></svg>
<div class="t" style="top:113.80px;font-size:9.1px;color:#484644;left:564.80px;letter-spacing:0.090px">Category: None</div>
<svg class="r" style="left:636px;top:114px;" width="10" height="7" viewBox="0 0 10 7"><path d="M1.2 1.6 L5 5.2 L8.8 1.6" stroke="#484644" stroke-width="0.9" fill="none"/></svg>
<svg class="r" style="left:304px;top:143px;" width="12" height="12" viewBox="0 0 12 12"><circle cx="6.2" cy="5.6" r="4.9" stroke="#605e5c" stroke-width="0.9" fill="none"/><path d="M6.2 4.8 L6.2 8" stroke="#605e5c" stroke-width="1"/><circle cx="6.2" cy="3.4" r="0.6" fill="#605e5c"/></svg>
<div class="t" style="top:144.75px;font-size:9.19px;color:#252423;left:325.90px;">26 May 2020 1:30 PM - 2:00 PM</div>
<div class="t" style="top:144.85px;font-size:8.99px;color:#6264a7;left:463.60px;">View series</div>
<div class="r" style="left:515.5px;top:144px;width:0.8px;height:9px;background:#d0cfcd;"></div>
<div class="t" style="top:144.85px;font-size:9.0px;color:#6264a7;left:522.40px;letter-spacing:0.241px">Show meeting info</div>
<svg class="r" style="left:604.5px;top:147px;" width="8" height="6" viewBox="0 0 8 6"><path d="M1.2 1.4 L4 4.2 L6.8 1.4" stroke="#6264a7" stroke-width="0.8" fill="none"/></svg>
<svg class="r" style="left:303px;top:173px;" width="13" height="11" viewBox="0 0 13 11"><rect x="1.4" y="1.4" width="10.6" height="8" rx="1.2" stroke="#605e5c" stroke-width="0.9" fill="#e6e4e2"/><path d="M5 3.6 L8.4 5.4 L5 7.2 Z" stroke="#605e5c" stroke-width="0.8" fill="none"/></svg>
<div class="r" style="left:326.5px;top:165.7px;width:93.6px;height:80.3px;background:#faf9f8;border-radius:2px;box-shadow:0 0 1.5px rgba(0,0,0,0.22), 0 1px 1px rgba(0,0,0,0.06)"></div>
<div class="r" style="left:423.6px;top:165.7px;width:93.6px;height:80.3px;background:#faf9f8;border-radius:2px;box-shadow:0 0 1.5px rgba(0,0,0,0.22), 0 1px 1px rgba(0,0,0,0.06)"></div>
<div class="r" style="left:520.7px;top:165.7px;width:93.6px;height:80.3px;background:#faf9f8;border-radius:2px;box-shadow:0 0 1.5px rgba(0,0,0,0.22), 0 1px 1px rgba(0,0,0,0.06)"></div>
<div class="r" style="left:330px;top:169.2px;width:86.5px;height:41.5px;overflow:hidden;background:linear-gradient(180deg,#0a4d8f 0%,#125a9c 40%,#6a98c4 75%,#d8e4ee 100%)"><svg width="87" height="42" viewBox="0 0 87 42" style="position:absolute;left:0;top:0"><path d="M0 27 C12 22 25 21 40 27 C55 33 72 33 87 29 L87 42 L0 42 Z" fill="#6cb8e4" opacity="0.9"/><path d="M0 34 C20 28 45 30 60 34 C72 37 80 35 87 33 L87 42 L0 42 Z" fill="#e6eef5"/><path d="M0 38 C25 34 55 36 87 38 L87 42 L0 42 Z" fill="#f4f4f4"/><path d="M36.6 15.8 L36.6 30 C36.6 31.3 37.9 31.9 38.9 31.3 L49.2 24.2 C50.2 23.5 50.2 22.5 49.2 21.8 L38.9 14.6 C37.9 14 36.6 14.6 36.6 15.8 Z" fill="#fff"/><text x="44" y="16" font-size="3.4" fill="#b8cce0" font-family="Liberation Sans">Q3 Sales Report</text><rect x="44" y="18.8" width="10" height="0.5" fill="#8fb0d0"/></svg></div>
<div class="t" style="top:214.85px;font-size:9.0px;color:#252423;left:173.30px;width:400px;text-align:center;">Recording</div>
<div class="t" style="top:226.93px;font-size:7.84px;color:#8a8886;left:172.90px;width:400px;text-align:center;">58m 9s</div>
<div class="r" style="left:459.5px;top:178.2px;width:21px;height:28px;background:#fff;border-radius:1px;box-shadow:0 0.6px 1.6px rgba(0,0,0,0.16)"></div>
<svg class="r" style="left:459.5px;top:178.2px;" width="21" height="28" viewBox="0 0 21 28"><g fill="#7b7ec6"><circle cx="8.1" cy="10.5" r="2"/><path d="M6.1 10.5 C5.8999999999999995 7.3 7.5 5.3 10.0 4.9 L10.0 6.3 C8.5 6.7 7.699999999999999 7.7 7.8999999999999995 9.5  Z"/><circle cx="12.7" cy="10.5" r="2"/><path d="M10.7 10.5 C10.5 7.3 12.1 5.3 14.6 4.9 L14.6 6.3 C13.1 6.7 12.299999999999999 7.7 12.5 9.5  Z"/></g><path d="M5.6 18.3 L7.6 18.3 M9.1 18.3 L16.8 18.3 M5.6 22.1 L7.6 22.1 M9.1 22.1 L16.8 22.1" stroke="#d8d6d4" stroke-width="0.9"/></svg>
<div class="t" style="top:214.88px;font-size:8.94px;color:#252423;left:270.30px;width:400px;text-align:center;">Transcript</div>
<svg class="r" style="left:550px;top:176px;" width="32" height="33" viewBox="0 0 32 33"><path d="M6.9 3 Q6.9 2 7.9 2 L27.1 2 Q28.1 2 28.1 3 L28.1 21.5 L17.5 31.1 L6.9 31.1 Z" fill="#fdfdfd" stroke="#e6e4e2" stroke-width="0.5"/><path d="M6.9 3.2 Q6.9 2 8.1 2 L26.9 2 Q28.1 2 28.1 3.2 L28.1 8.9 L6.9 8.9 Z" fill="#8b8cc7"/><g stroke="#e4e2e0" stroke-width="0.7"><path d="M8 12.9 L27 12.9 M8 16.5 L27 16.5 M8 19.8 L27 19.8 M8 23.5 L22 23.5 M8 27.1 L18.5 27.1"/></g><path d="M28.1 21.5 L19.5 21.5 Q18.6 21.5 18.6 22.4 L17.5 31.1 Z" fill="#fff" stroke="#dcdad8" stroke-width="0.5"/><rect x="2.3" y="9" width="2.6" height="15.5" fill="#eaa800"/><path d="M2.3 9 L3.6 6.6 L4.9 9 Z" fill="#b8a080"/><rect x="2.3" y="24.3" width="2.6" height="1.6" fill="#eb9a9a"/></svg>
<div class="t" style="top:214.78px;font-size:9.15px;color:#252423;left:367.00px;width:400px;text-align:center;">Notes</div>
<svg class="r" style="left:298px;top:258px;" width="24" height="24" viewBox="0 0 24 24"><g transform="rotate(45 11.5 12)" stroke="#605e5c" stroke-width="0.95" fill="none"><path d="M14 13.6 L14 8.6 A2.5 2.5 0 0 0 9 8.6 L9 15.4 A2.5 2.5 0 0 0 14 15.4"/><path d="M11.5 9.6 L11.5 14.6"/></g></svg>
<div class="r" style="left:326.4px;top:254px;width:191px;height:32px;background:#faf9f8;border-radius:2px;box-shadow:0 0 1.5px rgba(0,0,0,0.22), 0 1px 1px rgba(0,0,0,0.06)"></div>
<svg class="r" style="left:334px;top:260px;" width="18" height="18" viewBox="0 0 18 18"><path d="M4.6 1.8 L12.6 1.8 L16.2 5.4 L16.2 17 L4.6 17 Z" fill="#fff" stroke="#8a8886" stroke-width="0.9" stroke-linejoin="round"/><path d="M12.6 1.8 L12.6 5.4 L16.2 5.4" fill="none" stroke="#8a8886" stroke-width="0.8"/><path d="M13.3 10.4 L13.3 7.8 A2.6 2.6 0 1 1 10.7 10.4 Z" fill="#ed6c47"/><path d="M13.9 9.8 L13.9 7.3 A2.5 2.5 0 0 1 16 9.8 Z" fill="#ff8f6b"/><rect x="1.3" y="4.8" width="8.8" height="9" rx="0.8" fill="#c43e1c"/><path d="M4.4 12 L4.4 7 L6.2 7 C7.3 7 7.8 7.6 7.8 8.5 C7.8 9.4 7.2 10 6.2 10 L4.4 10" stroke="#fff" stroke-width="1" fill="none"/></svg>
<div class="t" style="top:266.79px;font-size:9.13px;color:#252423;left:361.90px;">Van Arsdel Quarterly Sales</div>
<svg class="r" style="left:494px;top:264px;" width="11" height="12" viewBox="0 0 11 12"><path d="M5.5 1 L5.5 8.4 M2.4 5.4 L5.5 8.5 L8.6 5.4 M1.8 10.8 L9.2 10.8" stroke="#484644" stroke-width="0.9" fill="none"/></svg>
<svg class="r" style="left:303px;top:304px;" width="13" height="12" viewBox="0 0 13 12"><g fill="#605e5c"><circle cx="2.5" cy="2.4" r="0.75"/><rect x="3.9" y="2" width="7.1" height="0.8"/><circle cx="4.6" cy="5.7" r="0.6"/><rect x="7" y="5.3" width="4" height="0.8"/><circle cx="4.6" cy="9.1" r="0.6"/><rect x="7" y="8.7" width="4" height="0.8"/></g></svg>
<div class="t" style="top:306.80px;font-size:9.1px;color:#252423;left:325.20px;letter-spacing:0.160px">Setting up time for sale updates with the leadership team. Here is the link to the deck</div>
<div class="t" style="top:319.79px;font-size:9.13px;color:#6264a7;left:325.20px;text-decoration:underline">Van Arsdel Quarterly Sales</div>
<div class="r" style="left:788.4px;top:103px;width:0.9px;height:472px;background:#e6e4e2;"></div>
<div class="t" style="top:114.55px;font-size:11.6px;color:#252423;font-weight:700;left:799.30px;">Tracking</div>
<div class="r" style="left:798.90px;top:143.90px;width:21.8px;height:21.8px;border-radius:50%;background:linear-gradient(180deg,#e8e2da,#d8c8b8);overflow:hidden;"><div style="position:absolute;left:0;top:0;width:100%;height:100%;filter:blur(0.5px)"><div style="position:absolute;left:1.09px;top:17.88px;width:19.62px;height:9.59px;border-radius:50%;background:#b06840;"></div><div style="position:absolute;left:3.27px;top:2.18px;width:15.26px;height:17.44px;border-radius:50%;background:#c98a50;"></div><div style="position:absolute;left:6.54px;top:5.89px;width:7.85px;height:10.03px;border-radius:50%;background:#f0caa8;"></div><div style="position:absolute;left:12.86px;top:9.59px;width:3.05px;height:5.23px;border-radius:50%;background:#e8b898;"></div></div></div>
<div class="t" style="top:145.80px;font-size:9.1px;color:#252423;left:829.00px;">Daniela Manderas</div>
<div class="t" style="top:157.90px;font-size:7.9px;color:#8a8886;left:829.00px;">Organiser</div>
<div class="r" style="left:799px;top:170.3px;width:194px;height:0.8px;background:#e1dfdd;"></div>
<div class="r" style="left:798.90px;top:179.60px;width:21.8px;height:21.8px;border-radius:50%;background:linear-gradient(90deg,#d8e4ec,#f4f4f4 50%,#c8c8c8);overflow:hidden;"><div style="position:absolute;left:0;top:0;width:100%;height:100%;filter:blur(0.5px)"><div style="position:absolute;left:0.44px;top:16.35px;width:20.93px;height:10.90px;border-radius:50%;background:#c4c4c6;"></div><div style="position:absolute;left:5.01px;top:2.83px;width:11.77px;height:10.90px;border-radius:50%;background:#2a201c;"></div><div style="position:absolute;left:6.98px;top:5.89px;width:7.85px;height:10.03px;border-radius:50%;background:#b48468;"></div><div style="position:absolute;left:7.63px;top:12.21px;width:6.54px;height:4.36px;border-radius:50%;background:#4a3428;"></div></div></div>
<div class="t" style="top:180.80px;font-size:9.1px;color:#252423;left:829.00px;">Aadi Kapoor</div>
<div class="t" style="top:193.90px;font-size:7.9px;color:#72bb3c;left:829.00px;">Accepted</div>
<div class="r" style="left:798.90px;top:212.10px;width:21.8px;height:21.8px;border-radius:50%;background:linear-gradient(90deg,#a8d0e4,#e0eef4);overflow:hidden;"><div style="position:absolute;left:0;top:0;width:100%;height:100%;filter:blur(0.5px)"><div style="position:absolute;left:0.44px;top:17.44px;width:20.93px;height:10.46px;border-radius:50%;background:#283a5a;"></div><div style="position:absolute;left:5.89px;top:3.49px;width:10.03px;height:7.85px;border-radius:50%;background:#282420;"></div><div style="position:absolute;left:6.76px;top:5.89px;width:8.28px;height:10.90px;border-radius:50%;background:#c89478;"></div></div></div>
<div class="t" style="top:213.80px;font-size:9.1px;color:#252423;left:829.00px;">Babak Shammas</div>
<div class="t" style="top:225.90px;font-size:7.9px;color:#72bb3c;left:829.00px;">Accepted</div>
<div class="r" style="left:798.90px;top:243.80px;width:21.8px;height:21.8px;border-radius:50%;background:linear-gradient(135deg,#4a5a30,#2e3a20 60%,#6a6a3a);overflow:hidden;"><div style="position:absolute;left:0;top:0;width:100%;height:100%;filter:blur(0.5px)"><div style="position:absolute;left:3.27px;top:18.09px;width:15.26px;height:7.41px;border-radius:50%;background:#c0a8e0;"></div><div style="position:absolute;left:3.71px;top:1.96px;width:14.39px;height:14.39px;border-radius:50%;background:#6a4028;"></div><div style="position:absolute;left:6.54px;top:6.10px;width:8.72px;height:10.46px;border-radius:50%;background:#f0c8b0;"></div></div></div>
<div class="t" style="top:245.80px;font-size:9.1px;color:#252423;left:829.00px;">Beth Davies</div>
<div class="t" style="top:257.90px;font-size:7.9px;color:#c94265;left:829.00px;">Declined</div>
<div class="r" style="left:798.90px;top:276.50px;width:21.8px;height:21.8px;border-radius:50%;background:linear-gradient(90deg,#e8e8e8,#f8f8f8);overflow:hidden;"><div style="position:absolute;left:0;top:0;width:100%;height:100%;filter:blur(0.5px)"><div style="position:absolute;left:0.44px;top:17.44px;width:20.93px;height:10.46px;border-radius:50%;background:#2a2a2a;"></div><div style="position:absolute;left:5.45px;top:3.05px;width:10.90px;height:8.72px;border-radius:50%;background:#3a302c;"></div><div style="position:absolute;left:6.98px;top:6.32px;width:7.85px;height:10.03px;border-radius:50%;background:#e0bca4;"></div><div style="position:absolute;left:8.72px;top:16.79px;width:4.36px;height:6.54px;border-radius:50%;background:#f4f4f4;"></div></div></div>
<div class="t" style="top:278.80px;font-size:9.1px;color:#252423;left:829.00px;">Pete Turner</div>
<div class="t" style="top:290.90px;font-size:7.9px;color:#72bb3c;left:829.00px;">Accepted</div>
<div class="t" style="top:319.95px;font-size:7.8px;color:#252423;font-weight:700;left:799.20px;">Optional</div>
<div class="r" style="left:798.90px;top:340.90px;width:21.8px;height:21.8px;border-radius:50%;background:linear-gradient(90deg,#8a8a8a,#c8c8c8);overflow:hidden;"><div style="position:absolute;left:0;top:0;width:100%;height:100%;filter:blur(0.5px)"><div style="position:absolute;left:1.09px;top:16.35px;width:19.62px;height:10.90px;border-radius:50%;background:#1c1c1c;"></div><div style="position:absolute;left:6.54px;top:3.49px;width:8.72px;height:8.72px;border-radius:50%;background:#5a3a24;"></div><div style="position:absolute;left:7.85px;top:5.67px;width:6.10px;height:7.85px;border-radius:50%;background:#e8c4aa;"></div><div style="position:absolute;left:9.16px;top:15.48px;width:3.49px;height:6.54px;border-radius:50%;background:#f0f0f0;"></div></div></div>
<div class="t" style="top:342.80px;font-size:9.1px;color:#252423;left:829.00px;">Charlotte de Crum</div>
<div class="t" style="top:354.90px;font-size:7.9px;color:#8a8886;left:829.00px;">Tentative</div>
<div class="r" style="left:798.90px;top:373.60px;width:21.8px;height:21.8px;border-radius:50%;background:linear-gradient(90deg,#eeeeee,#fafafa);overflow:hidden;"><div style="position:absolute;left:0;top:0;width:100%;height:100%;filter:blur(0.5px)"><div style="position:absolute;left:2.18px;top:17.88px;width:17.44px;height:9.59px;border-radius:50%;background:#e0a8c0;"></div><div style="position:absolute;left:4.80px;top:2.83px;width:11.34px;height:10.90px;border-radius:50%;background:#141010;"></div><div style="position:absolute;left:6.54px;top:6.32px;width:7.85px;height:10.03px;border-radius:50%;background:#6a4230;"></div></div></div>
<div class="t" style="top:374.80px;font-size:9.1px;color:#252423;left:829.00px;">Serena Davis</div>
<div class="t" style="top:387.90px;font-size:7.9px;color:#8a8886;left:829.00px;">Tentative</div>
<div class="t" style="top:416.18px;font-size:7.35px;color:#252423;font-weight:700;left:799.30px;">Rooms</div>
<div class="r" style="left:799.30px;top:433.90px;width:21.4px;height:21.4px;border-radius:50%;background:#e9e7e5;overflow:hidden;"></div>
<svg class="r" style="left:804px;top:438px;" width="12" height="13" viewBox="0 0 12 13"><path d="M2.6 11.4 L2.6 2.4 C2.6 1.8 3.2 1.5 4.2 1.5 L9.6 1.5 L9.6 11.4 Z" stroke="#797775" stroke-width="0.8" fill="none"/><path d="M7.8 1.8 L7.8 11.4" stroke="#797775" stroke-width="0.8"/><path d="M5.4 6.4 L6.2 6.4" stroke="#a19f9d" stroke-width="0.7"/></svg>
<div class="t" style="top:436.80px;font-size:9.1px;color:#252423;left:829.00px;letter-spacing:0.163px">Conference room 16537/AV/13</div>
<div class="t" style="top:447.93px;font-size:7.84px;color:#72bb3c;left:829.00px;">Accepted</div>
</body></html>
